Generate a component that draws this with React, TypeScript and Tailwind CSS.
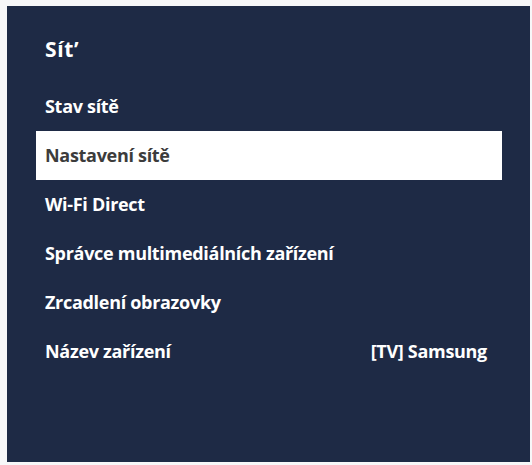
const items: { label: string; value?: string; selected?: boolean }[] = [
  { label: "Stav sítě" },
  { label: "Nastavení sítě", selected: true },
  { label: "Wi-Fi Direct" },
  { label: "Správce multimediálních zařízení" },
  { label: "Zrcadlení obrazovky" },
  { label: "Název zařízení", value: "[TV] Samsung" },
];

export default function App() {
  return (
    <div className="h-[465px] w-[532px] bg-[#f7f7f8] pb-[3px] pl-[7px] pr-[2px] pt-[6px] font-['Open_Sans',sans-serif]">
      <div className="h-[456px] w-[523px] bg-[#1e2a45] pl-[29px] pr-[28px] pt-[29px]">
        <h1 className="pl-[9px] text-[21px] font-bold leading-[28px] tracking-[0.6px] text-white">Sít’</h1>
        <ul className="mt-[19px]">
          {items.map((item) => (
            <li
              key={item.label}
              className={`flex h-[49px] items-center justify-between pl-[9px] pr-[15px] text-[18px] font-bold tracking-[-0.3px] ${
                item.selected ? "bg-white text-[#3c3c3c]" : "text-white"
              }`}
            >
              <span>{item.label}</span>
              {item.value && <span>{item.value}</span>}
            </li>
          ))}
        </ul>
      </div>
    </div>
  );
}
